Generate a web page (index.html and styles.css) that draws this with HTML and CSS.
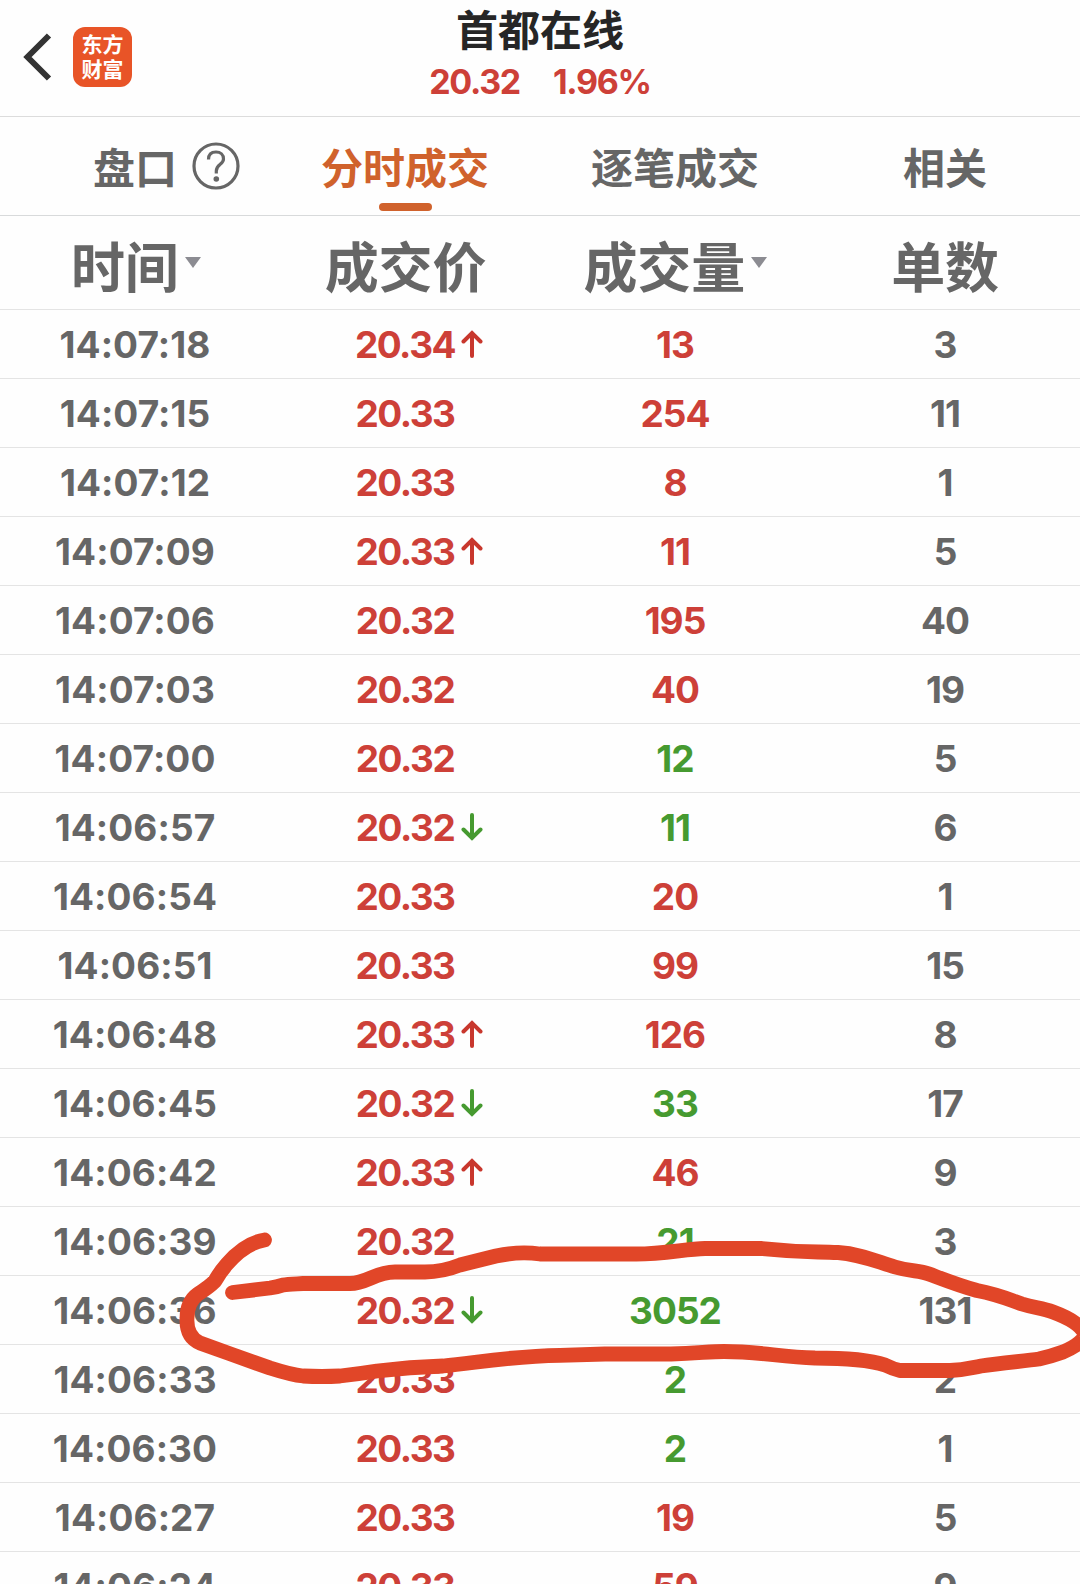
FILE: index.html
```html
<!DOCTYPE html>
<html lang="zh-CN">
<head>
  <meta charset="UTF-8">
  <meta name="viewport" content="width=device-width, initial-scale=1.0">
  <title>首都在线 - 分时成交</title>
  <link rel="stylesheet" href="styles.css">
</head>
<body>

  <!-- Arrow shapes used in the price column -->
  <svg class="defs" width="0" height="0">
    <symbol id="arrow-up" viewBox="0 0 22 28">
      <path d="M11 26V3M2.500 11.500L11 3L19.500 11.500"/>
    </symbol>
    <symbol id="arrow-down" viewBox="0 0 22 28">
      <path d="M11 2V25M2.500 16.500L11 25L19.500 16.500"/>
    </symbol>
  </svg>

  <!-- Header -->
  <header class="top">
    <div class="top-left">
      <svg class="back" viewBox="0 0 30 50" width="30" height="50"><path d="M26 3.500L4.500 25L26 46.500"/></svg>
      <div class="logo"><span>东方</span><span>财富</span></div>
    </div>
    <div class="stock">
      <h1>首都在线</h1>
      <p><span>20.32</span><span>1.96%</span></p>
    </div>
  </header>

  <!-- Tabs -->
  <nav class="tabs">
    <a class="tab"><span class="with-help">盘口<svg class="help" viewBox="0 0 48 48" width="48" height="48"><circle cx="24" cy="24" r="22"/><path d="M16.500 17.500C16.500 12.500 19.500 10 24 10S31.500 13 31.500 17C31.500 22.500 24.300 22 24.300 29V31.500"/><circle class="dot" cx="24.300" cy="37" r="2.800"/></svg></span></a>
    <a class="tab active">分时成交</a>
    <a class="tab">逐笔成交</a>
    <a class="tab">相关</a>
  </nav>

  <!-- Trades -->
  <main class="trades">
    <div class="row head">
      <span>时间<i class="caret"></i></span>
      <span>成交价</span>
      <span>成交量<i class="caret"></i></span>
      <span>单数</span>
    </div>
    <div class="row"><span class="time">14:07:18</span><span class="red price">20.34<svg class="arrow red"><use href="#arrow-up"/></svg></span><span class="red">13</span><span>3</span></div>
    <div class="row"><span class="time">14:07:15</span><span class="red price">20.33</span><span class="red">254</span><span>11</span></div>
    <div class="row"><span class="time">14:07:12</span><span class="red price">20.33</span><span class="red">8</span><span>1</span></div>
    <div class="row"><span class="time">14:07:09</span><span class="red price">20.33<svg class="arrow red"><use href="#arrow-up"/></svg></span><span class="red">11</span><span>5</span></div>
    <div class="row"><span class="time">14:07:06</span><span class="red price">20.32</span><span class="red">195</span><span>40</span></div>
    <div class="row"><span class="time">14:07:03</span><span class="red price">20.32</span><span class="red">40</span><span>19</span></div>
    <div class="row"><span class="time">14:07:00</span><span class="red price">20.32</span><span class="green">12</span><span>5</span></div>
    <div class="row"><span class="time">14:06:57</span><span class="red price">20.32<svg class="arrow green"><use href="#arrow-down"/></svg></span><span class="green">11</span><span>6</span></div>
    <div class="row"><span class="time">14:06:54</span><span class="red price">20.33</span><span class="red">20</span><span>1</span></div>
    <div class="row"><span class="time">14:06:51</span><span class="red price">20.33</span><span class="red">99</span><span>15</span></div>
    <div class="row"><span class="time">14:06:48</span><span class="red price">20.33<svg class="arrow red"><use href="#arrow-up"/></svg></span><span class="red">126</span><span>8</span></div>
    <div class="row"><span class="time">14:06:45</span><span class="red price">20.32<svg class="arrow green"><use href="#arrow-down"/></svg></span><span class="green">33</span><span>17</span></div>
    <div class="row"><span class="time">14:06:42</span><span class="red price">20.33<svg class="arrow red"><use href="#arrow-up"/></svg></span><span class="red">46</span><span>9</span></div>
    <div class="row"><span class="time">14:06:39</span><span class="red price">20.32</span><span class="green">21</span><span>3</span></div>
    <div class="row"><span class="time">14:06:36</span><span class="red price">20.32<svg class="arrow green"><use href="#arrow-down"/></svg></span><span class="green">3052</span><span>131</span></div>
    <div class="row"><span class="time">14:06:33</span><span class="red price">20.33</span><span class="green">2</span><span>2</span></div>
    <div class="row"><span class="time">14:06:30</span><span class="red price">20.33</span><span class="green">2</span><span>1</span></div>
    <div class="row"><span class="time">14:06:27</span><span class="red price">20.33</span><span class="red">19</span><span>5</span></div>
    <div class="row"><span class="time">14:06:24</span><span class="red price">20.33</span><span class="red">59</span><span>9</span></div>
  </main>

  <!-- Hand-drawn marker over the 14:06:36 trade -->
  <svg class="marker" viewBox="0 1220 1080 170" width="1080" height="170">
    <path d="M264.500 1240Q245 1243 227 1264Q220 1272 215 1281Q209 1287 198 1294Q187 1302 187 1318Q186 1337 200 1343C222 1351 250 1361 270 1368Q292 1375 303 1376Q322 1377 340 1376Q358 1374 377 1371Q410 1367 443 1366C476 1363 510 1356 560 1355.300L605 1354H671C700 1353 710 1351.500 724 1351.500C760 1351.500 780 1357 815 1358C850 1358 870 1360 885 1365Q893 1369 900 1370.500H950C965 1370 970 1368 981 1366C1000 1363 1025 1361 1039 1359Q1052 1356 1063 1352Q1084 1343 1085 1334Q1080 1322 1053 1312C1042 1308 1035 1308 1022 1304C1010 1300 1000 1295 977 1290.500C960 1286 945 1280 929 1274C918 1270 912 1272 895 1267C875 1261 860 1254 838 1252.500C810 1251.500 800 1252.500 762 1248.500H705C685 1249 665 1254 636 1254H540C526 1252 510 1253 496 1256C484 1259 472 1262 460 1265C450 1269 440 1272 425 1272H395C375 1272 367 1283.500 350 1283.500H303C293 1284 288 1284 283 1285Q277 1287 270 1288L232.500 1292.500"/>
  </svg>

</body>
</html>
```
FILE: styles.css
```css
* {
  box-sizing: border-box;
}
body {
  margin: 0;
  height: 1584px;
  overflow: hidden;
  position: relative;
  background-color: #fefefe;
  color: #666;
  font-family: Inter, "Noto Sans CJK SC", sans-serif;
  font-weight: bold;
}
.defs {
  display: block;
}

/* Header */
.top {
  display: grid;
  grid-template-columns: 270px 540px 270px;
  height: 117px;
  border-bottom: 1px solid #dcdcdc;
}
.top-left {
  display: flex;
  align-items: center;
  gap: 20px;
  padding: 0 0 3px 23px;
}
.back {
  fill: none;
  stroke: #333;
  stroke-width: 6;
}
.logo {
  display: flex;
  flex-direction: column;
  align-items: center;
  justify-content: center;
  width: 59px;
  height: 60px;
  border-radius: 12px;
  background-color: #e85427;
  color: #fff;
  font-size: 21px;
  line-height: 25px;
}
.stock {
  text-align: center;
}
.stock h1 {
  margin: 0;
  padding-top: 2px;
  font-size: 42px;
  line-height: 58px;
  color: #262626;
}
.stock p {
  display: flex;
  justify-content: center;
  gap: 33px;
  margin: 0;
  font-size: 34px;
  line-height: 44px;
  letter-spacing: -1.3px;
  color: #cd4038;
}

/* Tabs */
.tabs {
  display: grid;
  grid-template-columns: repeat(4, 1fr);
  height: 99px;
  border-bottom: 1px solid #d8dadb;
}
.tab {
  display: flex;
  flex-direction: column;
  align-items: center;
  padding-top: 23px;
  font-size: 42px;
  line-height: 58px;
}
.tab.active {
  color: #d0622c;
}
.tab.active::after {
  content: "";
  width: 53px;
  height: 8px;
  margin-top: 5px;
  border-radius: 4px;
  background-color: #d0622c;
}
.with-help {
  position: relative;
}
.help {
  position: absolute;
  left: 100%;
  top: 2px;
  margin-left: 15px;
  fill: none;
  stroke: #666;
  stroke-width: 3.2;
}
.help .dot {
  fill: #666;
  stroke: none;
}

/* Trades */
.row {
  display: grid;
  grid-template-columns: repeat(4, 1fr);
  height: 69px;
  border-bottom: 1px solid #e4e4e4;
  font-size: 37px;
  letter-spacing: -1px;
}
.row > span {
  display: flex;
  align-items: center;
  justify-content: center;
}
.row.head {
  height: 94px;
  padding: 3px 0 0 1px;
  font-size: 54px;
  letter-spacing: 0;
}
.caret {
  margin: -3px 0 0 6px;
  border: 8px solid transparent;
  border-top: 11px solid #8c8c92;
  border-bottom: 0;
}
.time {
  letter-spacing: 0.1px;
}
.price {
  position: relative;
  letter-spacing: -1.5px;
}
.red {
  color: #cd4038;
}
.green {
  color: #469a30;
}
.arrow {
  position: absolute;
  left: 191px;
  top: 20px;
  width: 22px;
  height: 28px;
  fill: none;
  stroke: currentColor;
  stroke-width: 4;
  stroke-linecap: round;
}
.arrow.red {
  color: #c8372d;
}

/* Marker */
.marker {
  position: absolute;
  left: 0;
  top: 1220px;
  fill: none;
  stroke: #e14628;
  stroke-width: 14.8;
  stroke-linecap: round;
  stroke-linejoin: round;
}
```
